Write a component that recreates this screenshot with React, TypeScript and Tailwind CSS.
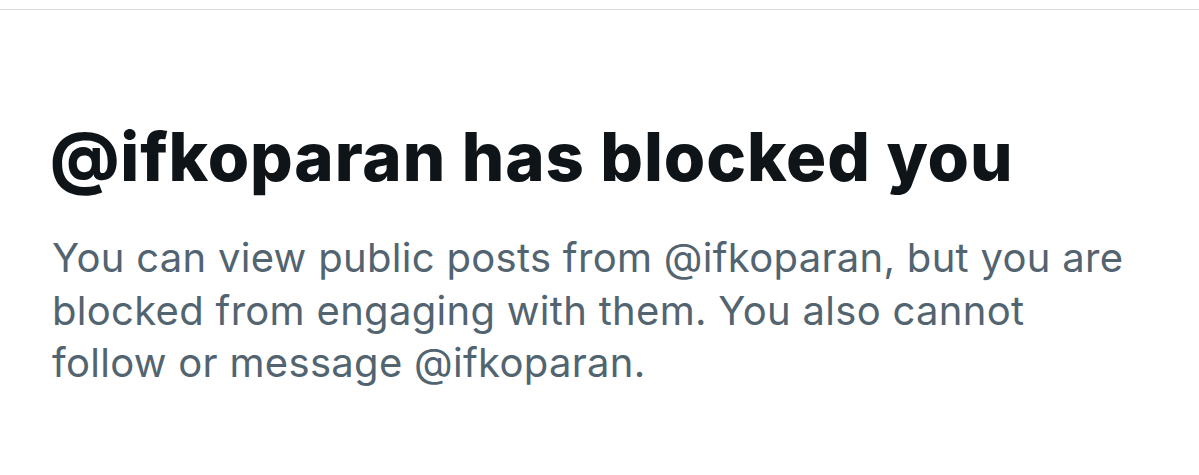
export default function App() {
  return (
    <div className="h-[475px] w-[1199px] bg-white font-['Inter',sans-serif]">
      <div className="pt-[9px]">
        <div className="h-px w-full bg-[#dcdcdc]" />
      </div>
      <div className="pl-[50px] pt-[103px]">
        <h1 className="text-[67px] font-extrabold leading-[88px] tracking-[0.9px] text-[#0f1419]">
          @ifkoparan has blocked you
        </h1>
        <p className="mt-[31px] pl-[2px] text-[40px] leading-[52.5px] tracking-[0.3px] text-[#536471]">
          You can view public posts from @ifkoparan, but you are
          <br />
          blocked from engaging with them. You also cannot
          <br />
          follow or message @ifkoparan.
        </p>
      </div>
    </div>
  );
}
